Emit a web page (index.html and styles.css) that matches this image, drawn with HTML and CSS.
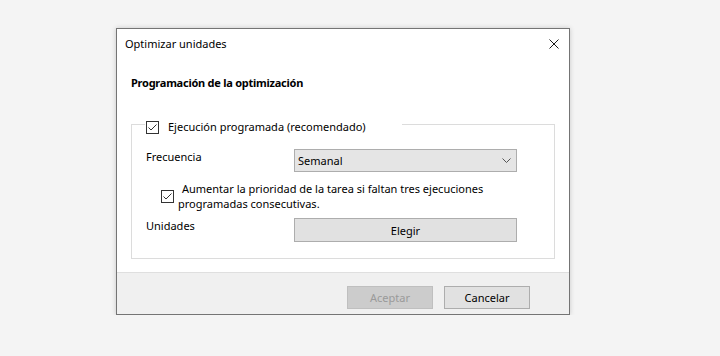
FILE: index.html
```html
<!DOCTYPE html>
<html lang="es">
<head>
    <meta charset="UTF-8">
    <meta name="viewport" content="width=device-width, initial-scale=1.0">
    <link rel="stylesheet" href="styles.css">
    <title>Optimizar unidades</title>
</head>
<body>

    <div class="dialog">
        <div class="titlebar">
            <span class="title">Optimizar unidades</span>
            <svg class="close" width="10" height="10" viewBox="0 0 10 10">
                <path d="M0.5 0.5 L9.5 9.5 M9.5 0.5 L0.5 9.5" stroke="#1a1a1a" stroke-width="1" fill="none"/>
            </svg>
        </div>

        <div class="content">
            <h2 class="heading">Programación de la optimización</h2>

            <fieldset class="group">
                <legend class="group-title">
                    <span class="check">
                        <svg width="11" height="11" viewBox="0 0 11 11">
                            <path d="M1.5 5.5 L4 8 L9.5 2.5" stroke="#333" stroke-width="1" fill="none"/>
                        </svg>
                    </span>
                    <span>Ejecución programada (recomendado)</span>
                </legend>

                <div class="row">
                    <div class="label">Frecuencia</div>
                    <div class="select">
                        <span>Semanal</span>
                        <svg width="9" height="5" viewBox="0 0 9 5">
                            <path d="M0.5 0.5 L4.5 4.5 L8.5 0.5" stroke="#555" stroke-width="1" fill="none"/>
                        </svg>
                    </div>
                </div>

                <div class="priority">
                    <span class="check">
                        <svg width="11" height="11" viewBox="0 0 11 11">
                            <path d="M1.5 5.5 L4 8 L9.5 2.5" stroke="#333" stroke-width="1" fill="none"/>
                        </svg>
                    </span>
                    <p class="priority-text">Aumentar la prioridad de la tarea si faltan tres ejecuciones programadas consecutivas.</p>
                </div>

                <div class="row">
                    <div class="label">Unidades</div>
                    <button class="btn btn-wide">Elegir</button>
                </div>
            </fieldset>
        </div>

        <div class="footer">
            <button class="btn btn-disabled">Aceptar</button>
            <button class="btn">Cancelar</button>
        </div>
    </div>

</body>
</html>
```

FILE: styles.css
```css
body {
    margin: 0;
    padding: 28px 0 0 116px;
    background-color: #f4f4f4;
    font-family: "Noto Sans", "Open Sans", sans-serif;
    font-size: 11px;
    color: #000;
}

.dialog {
    width: 452px;
    border: 1px solid #747474;
    background-color: #fff;
    box-shadow: 0 0 5px rgba(0, 0, 0, 0.18);
}

.titlebar {
    height: 30px;
    padding: 7px 10px 0 8px;
    box-sizing: border-box;
    display: flex;
    justify-content: space-between;
    line-height: 16px;
}

.close {
    margin-top: 3px;
}

.content {
    padding: 16px 14px 13px 14px;
}

.heading {
    margin: 0;
    font-size: 11px;
    font-weight: bold;
    line-height: 16px;
    letter-spacing: -0.25px;
}

.group {
    margin: 23px 0 0 0;
    padding: 15px 36px 16px 14px;
    border: 1px solid #dcdcdc;
}

.group-title {
    display: flex;
    align-items: center;
    gap: 9px;
    margin-left: -1px;
    padding: 6px 36px 0 1px;
    line-height: 14px;
}

.check {
    width: 11px;
    height: 11px;
    border: 1px solid #333;
    background-color: #fff;
    display: inline-flex;
}

.row {
    display: grid;
    grid-template-columns: 148px 223px;
    align-items: start;
}

.label {
    line-height: 15px;
}

.select {
    height: 21px;
    border: 1px solid #adadad;
    background-color: #e5e5e5;
    display: flex;
    justify-content: space-between;
    align-items: center;
    padding: 0 5px 0 3px;
}

.priority {
    display: flex;
    align-items: center;
    gap: 4px;
    margin: 9px 0 7px 15px;
}

.priority-text {
    margin: 0;
    width: 320px;
    line-height: 15px;
    text-indent: 4px;
}

.btn {
    height: 23px;
    width: 86px;
    border: 1px solid #adadad;
    background-color: #e1e1e1;
    font-family: inherit;
    font-size: 11px;
    color: #000;
    padding: 0;
}

.btn-wide {
    width: 223px;
    height: 24px;
}

.btn-disabled {
    background-color: #cccccc;
    border-color: #bfbfbf;
    color: #9a9a9a;
}

.footer {
    border-top: 1px solid #dfdfdf;
    background-color: #f0f0f0;
    height: 42px;
    padding: 13px 39px 0 0;
    box-sizing: border-box;
    display: flex;
    justify-content: flex-end;
    align-items: flex-start;
    gap: 11px;
}
```
